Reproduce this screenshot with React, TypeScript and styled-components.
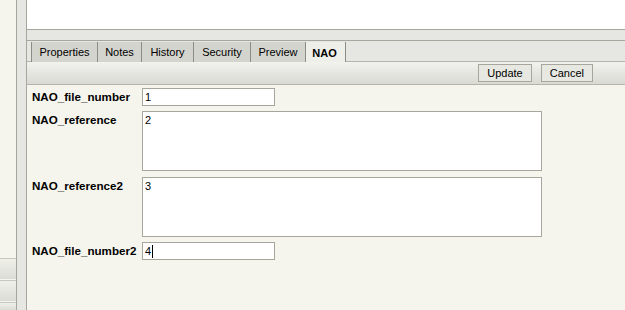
import React from "react";
import styled, { createGlobalStyle } from "styled-components";

const Global = createGlobalStyle`
  html, body {
    margin: 0;
    padding: 0;
    width: 625px;
    height: 310px;
    overflow: hidden;
    background: #f5f5ee;
  }
  * { box-sizing: border-box; }
`;

const Frame = styled.div`
  display: flex;
  width: 625px;
  height: 310px;
  font-family: "Liberation Sans", Arial, sans-serif;
  font-size: 11px;
  color: #000;
`;

const LeftPanel = styled.div`
  width: 17px;
  display: flex;
  flex-direction: column;
  justify-content: flex-end;
  background: #f5f5ee;
  border-right: 1px solid #a6a69c;
`;

const LeftItem = styled.div<{ $h?: number }>`
  height: ${(p) => p.$h ?? 21}px;
  border-top: 1px solid #c8c8c0;
  background: linear-gradient(#f0f0ea, #dcdcd6);
  margin-bottom: ${(p) => (p.$h ? 0 : 1)}px;
`;

const VSplitter = styled.div`
  width: 10px;
  background: #e6e6e2;
  border-right: 1px solid #a6a69c;
  display: flex;
  justify-content: center;
  padding-top: 78px;
`;

const VGrip = styled.div`
  width: 4px;
  height: 48px;
  background-image: radial-gradient(#a8a8a0 0.5px, transparent 0.7px);
  background-size: 2px 2px;
`;

const Main = styled.div`
  flex: 1;
  display: flex;
  flex-direction: column;
  min-width: 0;
`;

const TopPane = styled.div`
  height: 30px;
  background: #fff;
  border-bottom: 1px solid #a6a69c;
`;

const HSplitter = styled.div`
  height: 11px;
  background: #e6e6e2;
  border-bottom: 1px solid #a6a69c;
  display: flex;
  justify-content: flex-end;
  padding: 2px 61px 0 0;
`;

const HGrip = styled.div`
  width: 48px;
  height: 4px;
  background-image: radial-gradient(#a8a8a0 0.5px, transparent 0.7px);
  background-size: 2px 2px;
`;

const TabBar = styled.div`
  height: 21px;
  display: flex;
  padding-left: 4px;
  background: #e6e6e2;
  border-bottom: 1px solid #b4b4ac;
`;

const Tab = styled.div<{ $active?: boolean; $w: number }>`
  display: flex;
  align-items: center;
  justify-content: center;
  width: ${(p) => p.$w}px;
  height: ${(p) => (p.$active ? "21px" : "20px")};
  margin: 1px 0 ${(p) => (p.$active ? "-1px" : "0")};
  padding-right: ${(p) => (p.$active ? "2px" : "0")};
  background: ${(p) => (p.$active ? "#efefea" : "#d4d4ce")};
  border-left: 1px solid #8c8c84;
  border-right: ${(p) => (p.$active ? "1px solid #8c8c84" : "none")};
  font-weight: ${(p) => (p.$active ? "bold" : "normal")};
`;

const Toolbar = styled.div`
  height: 23px;
  display: flex;
  justify-content: flex-end;
  align-items: center;
  gap: 9px;
  padding-right: 32px;
  background: linear-gradient(#f2f2ee, #dadad4);
  border-bottom: 1px solid #b4b4ac;
`;

const Button = styled.button`
  height: 18px;
  padding: 0 8px;
  font-family: "Liberation Sans", Arial, sans-serif;
  font-size: 11px;
  color: #000;
  background: #e8e8e2;
  border: 1px solid #a6a69c;
  border-radius: 0;
`;

const Form = styled.div`
  flex: 1;
  background: #f5f5ee;
  padding: 3px 0 0 5px;
  display: flex;
  flex-direction: column;
  gap: 5px;
`;

const Row = styled.div<{ $extra?: number }>`
  display: flex;
  align-items: flex-start;
  margin-top: ${(p) => p.$extra ?? 0}px;
`;

const Label = styled.div`
  width: 110px;
  font-weight: bold;
  font-size: 11.6px;
  padding-top: 2px;
`;

const Field = styled.div<{ $w: number; $h: number }>`
  width: ${(p) => p.$w}px;
  height: ${(p) => p.$h}px;
  background: #fff;
  border: 1px solid #a6a69c;
  padding: 2px;
  line-height: 12px;
  display: flex;
  align-items: flex-start;
`;

const Caret = styled.span`
  display: inline-block;
  width: 1px;
  height: 13px;
  background: #000;
  margin-left: 1px;
`;

const tabs = [
  { name: "Properties", w: 66 },
  { name: "Notes", w: 44 },
  { name: "History", w: 52 },
  { name: "Security", w: 57 },
  { name: "Preview", w: 55 },
];

const fields = [
  { label: "NAO_file_number", value: "1", w: 133, h: 18, extra: 0 },
  { label: "NAO_reference", value: "2", w: 400, h: 60, extra: 0 },
  { label: "NAO_reference2", value: "3", w: 400, h: 60, extra: 1 },
  { label: "NAO_file_number2", value: "4", w: 133, h: 18, extra: 0, caret: true },
];

export default function App() {
  return (
    <>
      <Global />
      <Frame>
        <LeftPanel>
          <LeftItem />
          <LeftItem />
          <LeftItem $h={8} />
        </LeftPanel>
        <VSplitter>
          <VGrip />
        </VSplitter>
        <Main>
          <TopPane />
          <HSplitter>
            <HGrip />
          </HSplitter>
          <TabBar>
            {tabs.map((t) => (
              <Tab key={t.name} $w={t.w}>
                {t.name}
              </Tab>
            ))}
            <Tab $active $w={41}>
              NAO
            </Tab>
          </TabBar>
          <Toolbar>
            <Button>Update</Button>
            <Button>Cancel</Button>
          </Toolbar>
          <Form>
            {fields.map((f) => (
              <Row key={f.label} $extra={f.extra}>
                <Label>{f.label}</Label>
                <Field $w={f.w} $h={f.h}>
                  {f.value}
                  {f.caret && <Caret />}
                </Field>
              </Row>
            ))}
          </Form>
        </Main>
      </Frame>
    </>
  );
}
